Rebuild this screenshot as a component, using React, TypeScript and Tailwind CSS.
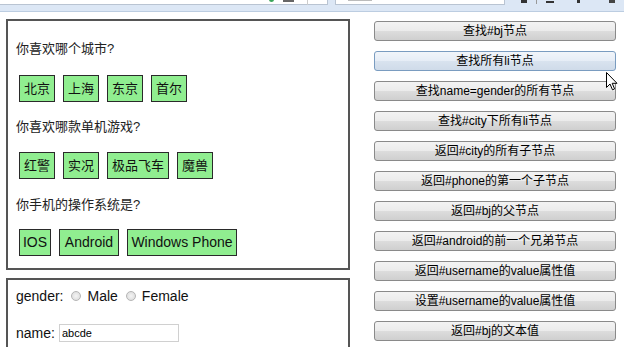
import React from "react";

const FONT = "font-['Liberation_Sans','Noto_Sans_CJK_SC',sans-serif]";

const CITIES = [
  { label: "北京", w: "w-[36px] text-[13px]" },
  { label: "上海", w: "w-[36px] text-[13px]" },
  { label: "东京", w: "w-[36px] text-[13px]" },
  { label: "首尔", w: "w-[36px] text-[13px]" },
];

const GAMES = [
  { label: "红警", w: "w-[36px] text-[13px]" },
  { label: "实况", w: "w-[36px] text-[13px]" },
  { label: "极品飞车", w: "w-[62px] text-[13px]" },
  { label: "魔兽", w: "w-[36px] text-[13px]" },
];

const PHONES = [
  { label: "IOS", w: "w-[32px] text-[14px]" },
  { label: "Android", w: "w-[60px] text-[14px]" },
  { label: "Windows Phone", w: "w-[110px] text-[14px]" },
];

const ACTIONS = [
  "查找#bj节点",
  "查找所有li节点",
  "查找name=gender的所有节点",
  "查找#city下所有li节点",
  "返回#city的所有子节点",
  "返回#phone的第一个子节点",
  "返回#bj的父节点",
  "返回#android的前一个兄弟节点",
  "返回#username的value属性值",
  "设置#username的value属性值",
  "返回#bj的文本值",
];

function Item({ label, w }: { label: string; w: string }) {
  return (
    <li
      className={`${w} h-[27px] flex items-center justify-center border border-[#2a2a2a] bg-[#90ee90] text-[#111]`}
    >
      {label}
    </li>
  );
}

function Radio({ label }: { label: string }) {
  return (
    <span className="flex items-center">
      <span className="ml-[8px] w-[10px] h-[10px] rounded-full border border-[#b5b5b5] bg-[radial-gradient(circle,#f4f4f4,#d8d8d8)]" />
      <span className="ml-[6px]">{label}</span>
    </span>
  );
}

export default function App() {
  return (
    <div className={`h-[347px] w-[624px] overflow-hidden bg-white relative ${FONT}`}>
      {/* browser chrome remnant */}
      <div className="h-[12px] flex bg-[#dce7f5] border-b border-[#bccde1]">
        <div className="w-[328px] h-[5px] bg-white border-b border-r border-[#b9c4d2] relative">
          <span className="absolute left-[269px] top-[-3px] w-[5px] h-[5px] rounded-full bg-[#3aa55a]" />
          <span className="absolute left-[283px] top-[0px] w-[11px] h-[2px] bg-[#666]" />
          <span className="absolute left-[307px] top-[0px] w-[1px] h-[5px] bg-[#ccc]" />
        </div>
        <div className="ml-[7px] w-[170px] h-[5px] bg-white border-b border-l border-r border-[#b9c4d2] relative">
          <span className="absolute left-[12px] top-[0px] w-[24px] h-[1px] bg-[#bbb]" />
        </div>
        <div className="ml-[16px] flex gap-[9px] items-start">
          <span className="mt-0 w-[6px] h-[3px] bg-[#333]" />
          <span className="w-[1px] h-[4px] bg-[#999]" />
          <span className="w-[8px] h-[2px] mt-[1px] bg-[#333]" />
          <span className="ml-[14px] w-[3px] h-[3px] bg-[#333]" />
          <span className="ml-[20px] w-[6px] h-[3px] bg-[#444]" />
        </div>
      </div>

      <div className="flex items-start">
        {/* left column */}
        <div className="ml-[6px] mt-[7px] w-[344px] flex flex-col text-[13px] text-[#222]">
          <div className="h-[251px] border-2 border-[#555] px-[8px] pt-[18px]">
            <p className="h-[20px] leading-[20px]">你喜欢哪个城市?</p>
            <ul className="mt-[16px] ml-[3px] flex gap-[8px]">
              {CITIES.map((c) => (
                <Item key={c.label} {...c} />
              ))}
            </ul>
            <p className="mt-[15px] h-[20px] leading-[20px]">你喜欢哪款单机游戏?</p>
            <ul className="mt-[15px] ml-[3px] flex gap-[8px]">
              {GAMES.map((c) => (
                <Item key={c.label} {...c} />
              ))}
            </ul>
            <p className="mt-[16px] h-[20px] leading-[20px]">你手机的操作系统是?</p>
            <ul className="mt-[14px] ml-[3px] flex gap-[8px]">
              {PHONES.map((c) => (
                <Item key={c.label} {...c} />
              ))}
            </ul>
          </div>

          <div className="mt-[8px] h-[80px] border-2 border-[#555] px-[8px] pt-[6px] text-[14px] text-[#111]">
            <div className="h-[20px] flex items-center">
              gender:
              <Radio label="Male" />
              <Radio label="Female" />
            </div>
            <div className="mt-[18px] h-[18px] flex items-center">
              name:
              <input
                readOnly
                value="abcde"
                className="ml-[4px] w-[120px] h-[18px] border border-[#d0d0d0] px-[2px] text-[11px] text-black outline-none"
              />
            </div>
          </div>
        </div>

        {/* right column */}
        <div className="ml-[24px] mt-[9px] w-[242px] flex flex-col gap-[10px]">
          {ACTIONS.map((a, i) => (
            <button
              key={a}
              className={`h-[20px] rounded-[3px] border text-[12px] leading-none text-black ${
                i === 1
                  ? "border-[#7a9cc0] bg-[linear-gradient(#f1f5fa,#e6edf6_50%,#d9e3ef_50%,#cfdbe9)]"
                  : "border-[#8a8a8a] bg-[linear-gradient(#f3f3f3,#ebebeb_50%,#dddddd_50%,#cfcfcf)]"
              }`}
            >
              {a}
            </button>
          ))}
        </div>
      </div>

      {/* mouse cursor */}
      <svg className="absolute left-[606px] top-[72px]" width="12" height="19" viewBox="0 0 12 19">
        <path
          d="M0.5 0.5 L0.5 15.5 L4 12 L6.5 17.8 L8.6 16.9 L6.2 11.3 L11 11.3 Z"
          fill="white"
          stroke="black"
          strokeWidth="1"
          strokeLinejoin="round"
        />
      </svg>
    </div>
  );
}
